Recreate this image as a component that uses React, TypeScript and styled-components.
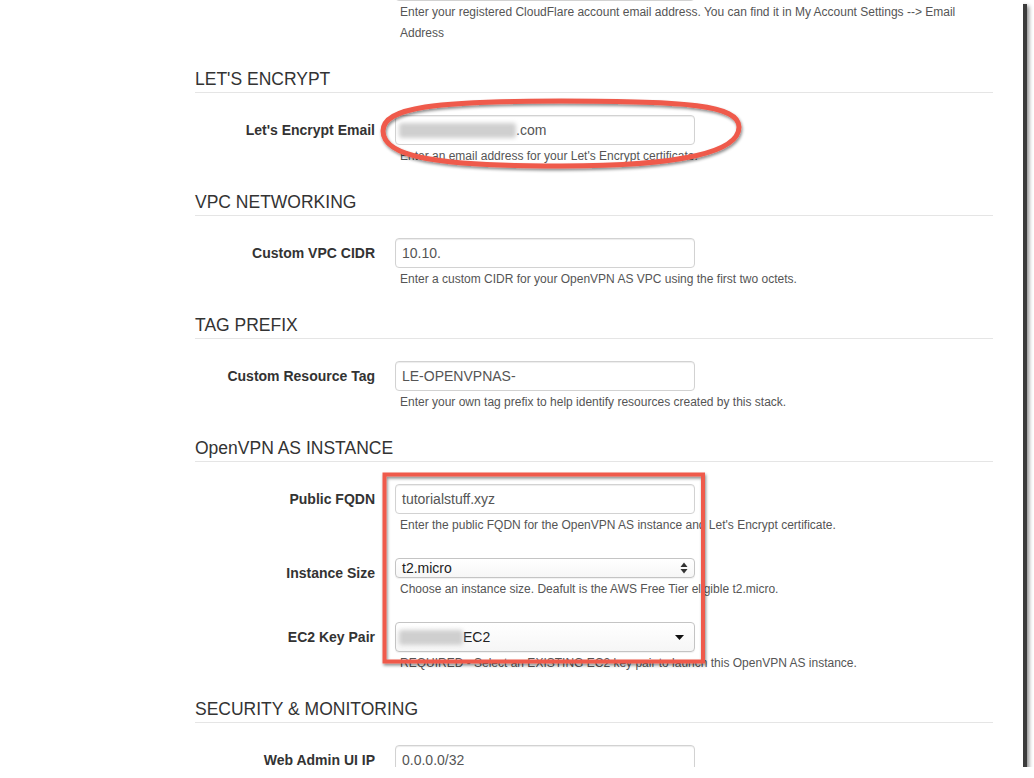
import React from 'react';
import styled, { createGlobalStyle } from 'styled-components';

const red = '#ef5a4c';

const GlobalStyle = createGlobalStyle`
  body {
    margin: 0;
    background: #fff;
    font-family: "Liberation Sans", Arial, Helvetica, sans-serif;
    color: #333;
  }
`;

const Window = styled.div`
  position: relative;
  width: 1023px;
  height: 767px;
  overflow: hidden;
  background: #fff;
  box-shadow: 4px 4px 0 #3b3b3b, 6px 6px 4px rgba(0, 0, 0, 0.45);
`;

// page is scrolled, the CloudFlare field sits mostly above the top edge
const Content = styled.div`
  width: 798px;
  padding-left: 195px;
  margin-top: -29px;
`;

const SectionTitle = styled.h4`
  margin: 0 0 22px;
  padding: 3px 0 3px;
  border-bottom: 1px solid #e5e5e5;
  font-size: 17.5px;
  font-weight: 400;
  line-height: 20px;
  color: #333;
`;

const FormGroup = styled.div`
  display: grid;
  grid-template-columns: 180px 1fr;
  column-gap: 20px;
  margin-bottom: 22px;
`;

const Label = styled.label`
  padding-top: 5px;
  text-align: right;
  font-size: 14px;
  font-weight: 700;
  line-height: 20px;
  color: #333;
`;

const Control = styled.div`
  display: flex;
  flex-direction: column;
`;

const Field = styled.div<{ $small?: boolean; $select?: boolean }>`
  box-sizing: border-box;
  width: 300px;
  height: ${(p) => (p.$small ? '20px' : '30px')};
  display: flex;
  align-items: center;
  padding: 0 6px;
  border: 1px solid ${(p) => (p.$select ? '#c4c4c4' : '#d2d2d2')};
  border-radius: 4px;
  background: ${(p) => (p.$select ? 'linear-gradient(#ffffff, #f6f6f6)' : '#fff')};
  box-shadow: ${(p) => (p.$select ? '0 1px 1px rgba(0,0,0,0.06)' : 'inset 0 1px 1px rgba(0, 0, 0, 0.075)')};
  font-size: 14px;
  color: ${(p) => (p.$select ? '#222' : '#555')};
`;

const FieldText = styled.span`
  flex: 1;
  display: flex;
  align-items: center;
  white-space: nowrap;
`;

const Blurred = styled.span<{ $w: number }>`
  display: inline-block;
  width: ${(p) => p.$w}px;
  height: 15px;
  margin-left: -3px;
  background: #cfcfcf;
  border-radius: 3px;
  filter: blur(2px);
`;

const Help = styled.p`
  margin: 1px 0 0;
  padding-left: 5px;
  font-size: 12px;
  line-height: 21px;
  color: #555;
`;

const Overlay = styled.svg`
  position: absolute;
  top: 0;
  left: 0;
  width: 1023px;
  height: 767px;
  pointer-events: none;
`;

const Stepper = () => (
  <svg width="8" height="12" viewBox="0 0 8 12">
    <path d="M4 0.5 L7.5 5 H0.5 Z" fill="#333" />
    <path d="M4 11.5 L7.5 7 H0.5 Z" fill="#333" />
  </svg>
);

const Caret = () => (
  <svg width="9" height="5" viewBox="0 0 9 5" style={{ marginRight: 4 }}>
    <path d="M0 0 H9 L4.5 5 Z" fill="#111" />
  </svg>
);

const Annotations = () => (
  <Overlay viewBox="0 0 1023 767">
    <defs>
      <filter id="sh" x="-10%" y="-30%" width="120%" height="160%">
        <feDropShadow dx="1" dy="2" stdDeviation="1.5" floodColor="#000" floodOpacity="0.45" />
      </filter>
    </defs>
    <path
      d="M383 131 C383 107 436 101 561 101 C686 101 739 105 739 127 C739 151 686 166 561 166 C436 166 383 157 383 131 Z"
      fill="none"
      stroke={red}
      strokeWidth="5"
      filter="url(#sh)"
    />
    <rect x="384.5" y="474.5" width="318.5" height="187" fill="none" stroke={red} strokeWidth="4" filter="url(#sh)" />
  </Overlay>
);

const App: React.FC = () => {
  return (
    <Window>
      <GlobalStyle />
      <Content>
        <FormGroup>
          <Label />
          <Control>
            <Field />
            <Help>
              Enter your registered CloudFlare account email address. You can find it in My Account Settings --&gt; Email
              Address
            </Help>
          </Control>
        </FormGroup>

        <SectionTitle>LET'S ENCRYPT</SectionTitle>
        <FormGroup>
          <Label>Let's Encrypt Email</Label>
          <Control>
            <Field>
              <FieldText>
                <Blurred $w={117} />
                .com
              </FieldText>
            </Field>
            <Help>Enter an email address for your Let's Encrypt certificate.</Help>
          </Control>
        </FormGroup>

        <SectionTitle>VPC NETWORKING</SectionTitle>
        <FormGroup>
          <Label>Custom VPC CIDR</Label>
          <Control>
            <Field>
              <FieldText>10.10.</FieldText>
            </Field>
            <Help>Enter a custom CIDR for your OpenVPN AS VPC using the first two octets.</Help>
          </Control>
        </FormGroup>

        <SectionTitle>TAG PREFIX</SectionTitle>
        <FormGroup>
          <Label>Custom Resource Tag</Label>
          <Control>
            <Field>
              <FieldText>LE-OPENVPNAS-</FieldText>
            </Field>
            <Help>Enter your own tag prefix to help identify resources created by this stack.</Help>
          </Control>
        </FormGroup>

        <SectionTitle>OpenVPN AS INSTANCE</SectionTitle>
        <FormGroup>
          <Label>Public FQDN</Label>
          <Control>
            <Field>
              <FieldText>tutorialstuff.xyz</FieldText>
            </Field>
            <Help>Enter the public FQDN for the OpenVPN AS instance and Let's Encrypt certificate.</Help>
          </Control>
        </FormGroup>
        <FormGroup>
          <Label>Instance Size</Label>
          <Control>
            <Field $small $select>
              <FieldText>t2.micro</FieldText>
              <Stepper />
            </Field>
            <Help>Choose an instance size. Deafult is the AWS Free Tier eligible t2.micro.</Help>
          </Control>
        </FormGroup>
        <FormGroup>
          <Label>EC2 Key Pair</Label>
          <Control>
            <Field $select>
              <FieldText>
                <Blurred $w={64} />
                EC2
              </FieldText>
              <Caret />
            </Field>
            <Help>REQUIRED - Select an EXISTING EC2 key pair to launch this OpenVPN AS instance.</Help>
          </Control>
        </FormGroup>

        <SectionTitle>SECURITY &amp; MONITORING</SectionTitle>
        <FormGroup>
          <Label>Web Admin UI IP</Label>
          <Control>
            <Field>
              <FieldText>0.0.0.0/32</FieldText>
            </Field>
          </Control>
        </FormGroup>
      </Content>
      <Annotations />
    </Window>
  );
};

export default App;
